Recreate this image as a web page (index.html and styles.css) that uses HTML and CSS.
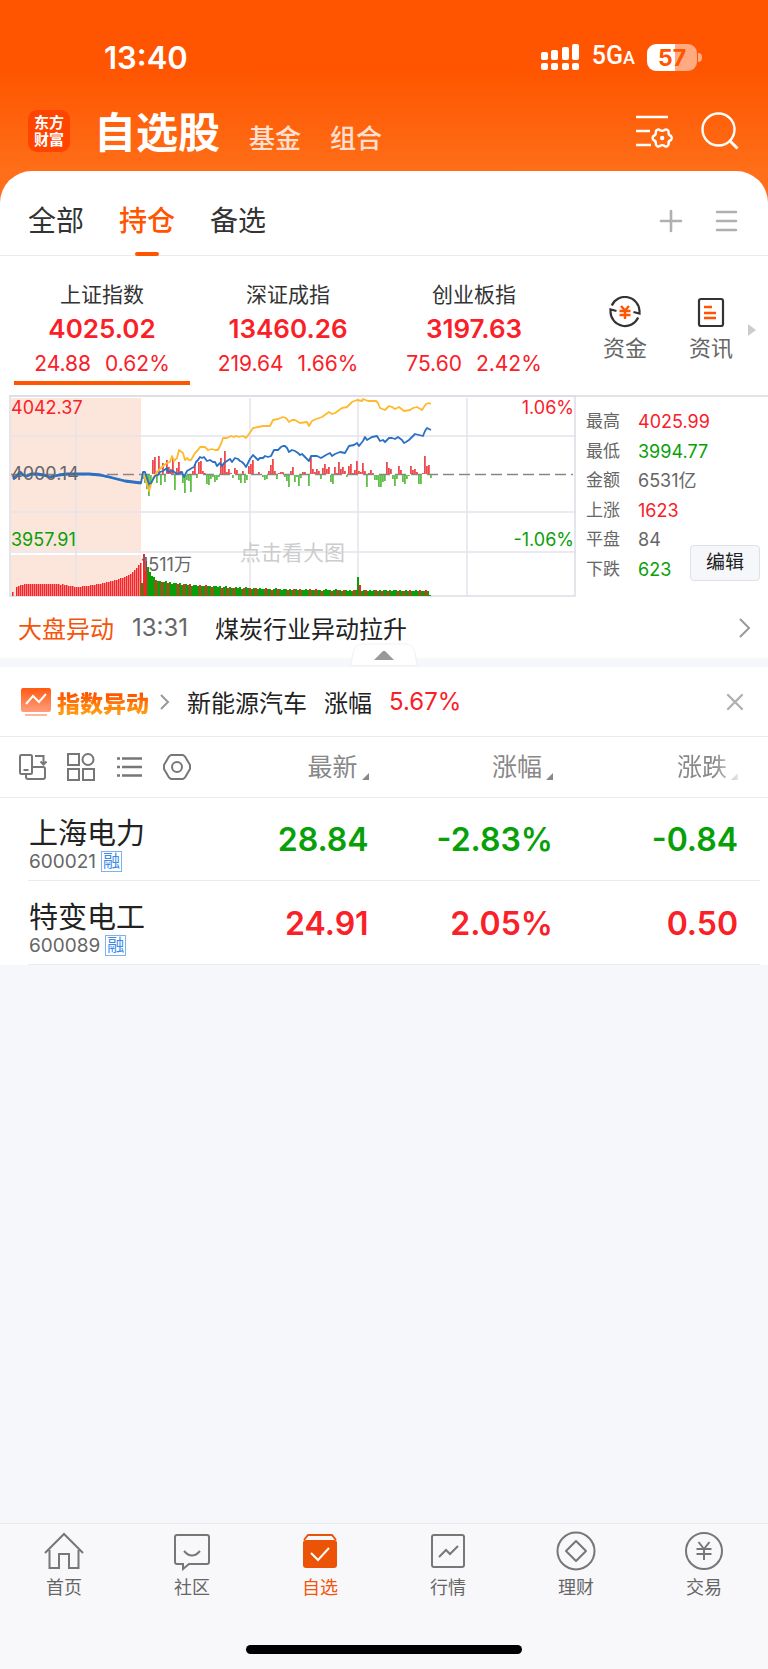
FILE: index.html
```html
<!DOCTYPE html>
<html lang="zh-CN">
<head>
<meta charset="utf-8">
<meta name="viewport" content="width=device-width, initial-scale=1">
<title>自选股</title>
<link rel="stylesheet" href="styles.css">
</head>
<body>
<header class="top">
  <div class="status">
    <time class="clock">13:40</time>
    <div class="status-right">
      <svg class="signal" width="40" height="28" viewBox="0 0 40 28" fill="#fff" aria-hidden="true">
        <rect x="1" y="9" width="7" height="8" rx="2"/><rect x="11" y="7" width="7" height="10" rx="2"/><rect x="22" y="4" width="7" height="13" rx="2"/><rect x="32" y="1" width="7" height="16" rx="2"/>
        <rect x="1" y="20" width="7" height="7" rx="2"/><rect x="11" y="20" width="7" height="7" rx="2"/><rect x="22" y="20" width="7" height="7" rx="2"/><rect x="32" y="20" width="7" height="7" rx="2"/>
      </svg>
      <span class="network">5G<small>A</small></span>
      <span class="battery">57</span>
    </div>
  </div>
  <div class="titlebar">
    <a class="logo" href="#">东方<br>财富</a>
    <nav class="sections">
      <h1><a href="#">自选股</a></h1>
      <a href="#">基金</a>
      <a href="#">组合</a>
    </nav>
    <button class="icon-btn" aria-label="设置">
      <svg width="38" height="38" viewBox="0 0 38 38" fill="none" stroke="#fff" stroke-width="2.4">
        <path d="M1 5h32M1 19h14M1 33h15"/>
        <path d="M22.200 17.800q1.500-1 3 .5q2 1.200 4 0q1.500-1.500 3-.5q1.800 1 1.300 3q0 2.400 2.500 3.200q1.500 2 0 4q-2.500.8-2.500 3.200q.5 2-1.300 3q-1.500 1-3-.5q-2-1.200-4 0q-1.500 1.500-3 .5q-1.800-1-1.300-3q0-2.400-2.500-3.200q-1.500-2 0-4q2.500-.8 2.500-3.200q-.5-2 1.300-3z" stroke-linejoin="round"/>
        <circle cx="27.200" cy="26" r="2.200" fill="#fff" stroke="none"/>
      </svg>
    </button>
    <button class="icon-btn" aria-label="搜索">
      <svg width="38" height="38" viewBox="0 0 38 38" fill="none" stroke="#fff" stroke-width="2.400"><circle cx="17.500" cy="17.500" r="16"/><path d="M28.500 28.500l8 8" stroke-width="3"/></svg>
    </button>
  </div>
</header>

<main class="sheet">
  <div class="groups">
    <a class="group" href="#">全部</a>
    <a class="group active" href="#">持仓</a>
    <a class="group" href="#">备选</a>
    <button class="icon-btn push" aria-label="添加">
      <svg width="24" height="24" viewBox="0 0 24 24" stroke="#b0b0b0" stroke-width="2.600" stroke-linecap="round"><path d="M12 2v20M2 12h20"/></svg>
    </button>
    <button class="icon-btn" aria-label="管理">
      <svg width="24" height="24" viewBox="0 0 24 24" stroke="#b0b0b0" stroke-width="2.500" stroke-linecap="round"><path d="M3 3h19M3 12h19M3 21h19"/></svg>
    </button>
  </div>

  <section class="indices">
    <a class="index active" href="#"><span class="index-name">上证指数</span><strong>4025.02</strong><span class="change"><span>24.88</span><span>0.62%</span></span></a>
    <a class="index" href="#"><span class="index-name">深证成指</span><strong>13460.26</strong><span class="change"><span>219.64</span><span>1.66%</span></span></a>
    <a class="index" href="#"><span class="index-name">创业板指</span><strong>3197.63</strong><span class="change"><span>75.60</span><span>2.42%</span></span></a>
    <div class="shortcuts">
      <a class="shortcut" href="#">
        <svg width="34" height="32" viewBox="0 0 34 32" fill="none" stroke="#333" stroke-width="2.200">
          <path d="M3.800 9.500A14.500 14.500 0 0 1 31.500 15v2.500l-6-1.500"/><path d="M30.200 21.500A14.500 14.500 0 0 1 2.500 16v-2.500l6 1.500"/>
          <path d="M13 10l4 4.500L21 10M11.500 15h11M11.500 19h11M17 14v9" stroke="#ff5500" stroke-width="2.400"/>
        </svg>资金</a>
      <a class="shortcut" href="#">
        <svg width="34" height="32" viewBox="0 0 34 32" fill="none" stroke="#333" stroke-width="2.200">
          <rect x="5" y="3" width="24" height="27" rx="2"/><path d="M10 11h8M10 17h12M10 22h12" stroke="#ff5500" stroke-width="2.400"/>
        </svg>资讯</a>
      <svg width="8" height="12" viewBox="0 0 8 12" fill="#ccc"><path d="M0 0l8 6-8 6z"/></svg>
    </div>
  </section>

  <section class="market">
    <figure class="chart" aria-label="上证指数分时图">
      <svg id="plot" viewBox="0 0 567 202" preserveAspectRatio="none"></svg>
      <span class="tag high">4042.37</span>
      <span class="tag mid">4000.14</span>
      <span class="tag low">3957.91</span>
      <span class="tag high-pct">1.06%</span>
      <span class="tag low-pct">-1.06%</span>
      <span class="tag volume">1511万</span>
      <span class="tag hint">点击看大图</span>
    </figure>
    <div class="quote">
      <dl class="stats">
        <dt>最高</dt><dd class="up">4025.99</dd>
        <dt>最低</dt><dd class="down">3994.77</dd>
        <dt>金额</dt><dd>6531亿</dd>
        <dt>上涨</dt><dd class="up">1623</dd>
        <dt>平盘</dt><dd>84</dd>
        <dt>下跌</dt><dd class="down">623</dd>
      </dl>
      <button class="edit">编辑</button>
    </div>
  </section>

  <a class="news" href="#">
    <span class="news-kind">大盘异动</span><time>13:31</time><span>煤炭行业异动拉升</span>
    <svg class="push" width="14" height="20" viewBox="0 0 14 20" fill="none" stroke="#999" stroke-width="2"><path d="M2 1l9 9-9 9"/></svg>
  </a>
  <div class="divider">
    <button class="collapse" aria-label="收起">
      <svg width="68" height="24" viewBox="0 0 68 24"><path d="M1 22.500C3 10 3 1 13 1h42c10 0 10 9 12 21.500z" fill="#fff" stroke="#f0f1f4"/><path d="M24 17l9-9h2l9 9z" fill="#999"/></svg>
    </button>
  </div>

  <section class="alert">
    <svg width="32" height="30" viewBox="0 0 32 30" fill="none">
      <defs><linearGradient id="warm" x2="0" y2="1"><stop stop-color="#ff5a12"/><stop offset="1" stop-color="#ff9e7d"/></linearGradient></defs>
      <rect x="1" y="1" width="30" height="24" rx="2" fill="url(#warm)"/><path d="M6 17l7-8 6 6 7-8" stroke="#fff" stroke-width="2"/><path d="M5 28h22" stroke="#ffb699" stroke-width="2"/>
    </svg>
    <strong class="alert-title">指数异动</strong>
    <svg width="12" height="18" viewBox="0 0 12 18" fill="none" stroke="#999" stroke-width="2"><path d="M2 2l7 7-7 7"/></svg>
    <a class="alert-text" href="#"><span>新能源汽车</span><span>涨幅</span><span class="up">5.67%</span></a>
    <button class="icon-btn push" aria-label="关闭">
      <svg width="18" height="18" viewBox="0 0 18 18" stroke="#b0b0b0" stroke-width="2.400" stroke-linecap="round"><path d="M2 2l14 14M16 2L2 16"/></svg>
    </button>
  </section>

  <table class="stocks">
    <thead>
      <tr>
        <th class="col-name">
          <div class="tools">
            <button class="icon-btn" aria-label="横竖屏">
              <svg width="30" height="30" viewBox="0 0 30 30" fill="none" stroke="#777" stroke-width="2"><rect x="2" y="3" width="12" height="19" rx="1.500"/><path d="M5.500 18h5M8 22v3q0 2 2 2h15q2 0 2-2v-8q0-2-2-2H14M17 4h8.500v8M22.500 9.500l3 3 3-3"/></svg>
            </button>
            <button class="icon-btn" aria-label="宫格">
              <svg width="30" height="30" viewBox="0 0 30 30" fill="none" stroke="#777" stroke-width="2"><rect x="2" y="2" width="11" height="11"/><circle cx="22" cy="7.500" r="5.500"/><rect x="2" y="17" width="11" height="11"/><rect x="17" y="17" width="11" height="11"/></svg>
            </button>
            <button class="icon-btn" aria-label="列表">
              <svg width="30" height="30" viewBox="0 0 30 30" fill="none" stroke="#777" stroke-width="2.600"><path d="M8 6.500h20M8 15h20M8 23.500h20M3 6.500h3M3 15h3M3 23.500h3"/></svg>
            </button>
            <button class="icon-btn" aria-label="指标">
              <svg width="30" height="30" viewBox="0 0 30 30" fill="none" stroke="#777" stroke-width="2"><path d="M9 3h12l2 1.500 5 8.500v4l-5 8.500-2 1.500H9l-2-1.500-5-8.500v-4l5-8.500z" stroke-linejoin="round"/><circle cx="15" cy="15" r="5"/></svg>
            </button>
          </div>
        </th>
        <th><button class="sort">最新</button></th>
        <th><button class="sort">涨幅</button></th>
        <th class="col-last"><button class="sort faded">涨跌</button></th>
      </tr>
    </thead>
    <tbody>
      <tr>
        <td class="col-name"><a href="#">上海电力</a><div class="code">600021<span class="margin">融</span></div></td>
        <td class="down">28.84</td><td class="down">-2.83%</td><td class="down col-last">-0.84</td>
      </tr>
      <tr>
        <td class="col-name"><a href="#">特变电工</a><div class="code">600089<span class="margin">融</span></div></td>
        <td class="up">24.91</td><td class="up">2.05%</td><td class="up col-last">0.50</td>
      </tr>
    </tbody>
  </table>
</main>

<nav class="tabbar">
  <div class="tabs">
    <a href="#"><svg width="40" height="40" viewBox="0 0 40 40"><path d="M1 22L20 3l19 19M5.500 19v18H15V23h10v14h9.500V19"/></svg>首页</a>
    <a href="#"><svg width="40" height="40" viewBox="0 0 40 40"><path d="M5 4h30q2 0 2 2v25q0 2-2 2H17l-6 5v-5H5q-2 0-2-2V6q0-2 2-2zM12 20q8 9 16 0"/></svg>社区</a>
    <a class="active" href="#"><svg width="40" height="40" viewBox="0 0 40 40"><path d="M4 9l4-5h24l4 5" /><rect x="3" y="9" width="34" height="28" rx="3" fill="#eb5406" stroke="none"/><path d="M11 22l7 7 11-12" stroke="#fff"/></svg>自选</a>
    <a href="#"><svg width="40" height="40" viewBox="0 0 40 40"><rect x="4" y="4" width="32" height="32" rx="2"/><path d="M11 26l7-7 4 4 8-8"/></svg>行情</a>
    <a href="#"><svg width="40" height="40" viewBox="0 0 40 40"><circle cx="20" cy="20" r="18.500"/><path d="M20 10l10 10-10 10-10-10z" stroke-linejoin="round"/></svg>理财</a>
    <a href="#"><svg width="40" height="40" viewBox="0 0 40 40"><circle cx="20" cy="20" r="18"/><path d="M14.500 11l5.500 7 5.500-7M12.500 18h15M12.500 23h15M20 18v11"/></svg>交易</a>
  </div>
  <div class="home-bar"></div>
</nav>
<script src="chart.js"></script>
</body>
</html>
```

FILE: styles.css
```css
* { box-sizing: border-box; }

body {
  margin: 0;
  min-height: 100vh;
  display: flex;
  flex-direction: column;
  background: #f6f7fa;
  color: #222;
  font-family: Inter, "Noto Sans CJK SC", sans-serif;
  font-size: 24px;
}

a { color: inherit; text-decoration: none; }

button {
  padding: 0;
  border: 0;
  background: none;
  color: inherit;
  font: inherit;
  cursor: pointer;
}

svg { display: block; flex: none; }

.up { color: #fa2028; }
.down { color: #08a008; }
.push { margin-left: auto; }
.icon-btn { display: block; flex: none; }

/* Header */
.top {
  height: 204px;
  padding-top: 36px;
  background: linear-gradient(#ff5500 70px, #ff6e18 171px);
  color: #fff;
}

.status {
  display: flex;
  justify-content: space-between;
  align-items: center;
  height: 42px;
  padding: 0 66px 0 104px;
}

.clock { font-size: 31px; font-weight: 600; }

.status-right { display: flex; align-items: center; gap: 12px; }
.network { font-family: Roboto, sans-serif; font-size: 25px; font-weight: 500; line-height: 32px; }
.network small { font-size: 18px; }

.battery {
  position: relative;
  width: 50px;
  height: 27px;
  margin-right: 5px;
  border-radius: 9px;
  background: linear-gradient(90deg, #fff 56%, #ffaa80 56%);
  color: #ff5500;
  font-size: 23px;
  font-weight: 700;
  line-height: 28px;
  text-align: center;
}

.battery::after {
  content: "";
  position: absolute;
  top: 9px;
  right: -5px;
  width: 4px;
  height: 9px;
  border-radius: 0 4px 4px 0;
  background: #ffaa80;
}

.titlebar {
  display: flex;
  align-items: center;
  gap: 28px;
  height: 76px;
  margin-top: 15px;
  padding: 0 29px 0 28px;
}

.logo {
  width: 42px;
  height: 42px;
  padding-top: 4px;
  border-radius: 9px;
  background: #ff4400;
  font-size: 15px;
  font-weight: 700;
  line-height: 17px;
  text-align: center;
}

.sections {
  display: flex;
  align-items: baseline;
  gap: 29px;
  margin-right: auto;
  padding-top: 10px;
  color: #ffe0d0;
  font-size: 26px;
  font-weight: 500;
  line-height: 60px;
}

.sections h1 { margin: 0 0 0 -4px; color: #fff; font-size: 42px; font-weight: 700; }

/* Sheet */
.sheet {
  margin-top: -33px;
  border-radius: 32px 32px 0 0;
  background: #fff;
}

.groups {
  display: flex;
  align-items: center;
  gap: 35px;
  height: 85px;
  padding: 0 30px 0 28px;
  border-bottom: 1px solid #ebebee;
}

.group {
  position: relative;
  padding-top: 16px;
  color: #333;
  font-size: 28px;
  line-height: 70px;
}

.group.active { color: #ff5500; font-weight: 500; }

.group.active::after {
  content: "";
  position: absolute;
  bottom: 0;
  left: 16px;
  width: 24px;
  height: 4px;
  border-radius: 2px;
  background: #ff5500;
}

.groups .icon-btn { margin-top: 16px; }
.groups .push { margin-right: -4px; }

/* Indices */
.indices {
  display: grid;
  grid-template-columns: 176fr 176fr 176fr 184fr;
  gap: 10px;
  height: 139px;
  padding: 23px 12px 10px 14px;
}

.index {
  display: flex;
  flex-direction: column;
  align-items: center;
  border-bottom: 4px solid transparent;
  color: #fa2028;
}

.index.active { border-color: #ff5500; }
.index-name { color: #333; font-size: 21px; line-height: 32px; }
.index strong { font-size: 26px; font-weight: 600; line-height: 36px; }
.change { display: flex; gap: 14px; font-size: 21px; line-height: 34px; white-space: nowrap; }

.shortcuts { display: flex; align-items: center; justify-content: flex-end; padding-bottom: 4px; }

.shortcut {
  display: flex;
  flex-direction: column;
  align-items: center;
  gap: 4px;
  margin-right: 42px;
  color: #666;
  font-size: 22px;
  line-height: 32px;
  white-space: nowrap;
}

.shortcut + .shortcut { margin-right: 15px; }

/* Intraday chart */
.market {
  display: grid;
  grid-template-columns: minmax(0, 567fr) minmax(0, 192fr);
  margin-left: 9px;
  border-top: 2px solid #e2e3e9;
}

.chart { position: relative; margin: -2px 0 0; }
.chart svg { width: 100%; height: 202px; }

.tag { position: absolute; font-size: 18px; line-height: 20px; }
.high { top: 3px; left: 2px; color: #fa2028; }
.mid { top: 69px; left: 2px; color: #666; }
.low { top: 135px; left: 2px; color: #08a008; }
.high-pct { top: 3px; right: 2px; color: #fa2028; }
.low-pct { top: 135px; right: 2px; color: #08a008; }
.volume { top: 160px; left: 132px; color: #666; }
.hint { top: 148px; right: 0; left: 0; color: #ccc; font-size: 21px; text-align: center; }

.quote { position: relative; padding: 10px 0 0 10px; }

.stats {
  display: grid;
  grid-template-columns: 52px 1fr;
  grid-template-rows: repeat(6, 1fr);
  height: 177px;
  margin: 0;
  color: #666;
  font-size: 17px;
  line-height: 29px;
}

.stats dd { margin: 0; font-size: 18px; }

.edit {
  position: absolute;
  top: 148px;
  right: 8px;
  width: 70px;
  height: 36px;
  border: 1px solid #dfe1e7;
  border-radius: 4px;
  background: #f6f7fa;
  font-size: 19px;
  line-height: 30px;
}

/* News */
.news {
  display: flex;
  align-items: center;
  height: 61px;
  padding: 0 16px 0 18px;
  white-space: nowrap;
}

.news-kind { color: #f4550b; }
.news time { margin: 0 27px 0 18px; color: #666; }

.divider { position: relative; height: 9px; background: #f6f7fa; }
.collapse { position: absolute; bottom: 0; left: 50%; margin-left: -34px; }

/* Alert */
.alert {
  display: flex;
  align-items: center;
  height: 70px;
  padding: 0 24px 0 20px;
  border-bottom: 1px solid #ebebee;
  white-space: nowrap;
}

.alert-title {
  margin: 0 10px 0 5px;
  background: linear-gradient(#ff5500 30%, #ff9a10 80%);
  background-clip: text;
  color: transparent;
  font-size: 23px;
  font-weight: 900;
}

.alert-text { display: flex; align-items: center; gap: 17px; margin-left: 16px; }

/* Stock table */
.stocks { width: 100%; border-collapse: collapse; table-layout: fixed; }
.stocks th, .stocks td { width: 24%; padding: 0; text-align: right; }
.stocks .col-name { width: 24%; text-align: left; }
.stocks .col-last { width: 28%; padding-right: 30px; }
.stocks thead tr { height: 60px; border-bottom: 1px solid #ebebee; }

.tools { display: flex; gap: 18px; padding-left: 18px; }

.sort {
  display: inline-flex;
  align-items: center;
  gap: 4px;
  color: #888;
  font-size: 25px;
  font-weight: 400;
  line-height: 34px;
}

.sort::after {
  content: "";
  align-self: flex-end;
  margin-bottom: 4px;
  border-left: 7px solid transparent;
  border-bottom: 7px solid #888;
}

.faded {
  -webkit-mask-image: linear-gradient(90deg, #000 60%, transparent 110%);
  mask-image: linear-gradient(90deg, #000 60%, transparent 110%);
}

.stocks tbody tr {
  height: 84px;
  background: linear-gradient(#ebebee, #ebebee) 28px bottom / calc(100% - 36px) 1px no-repeat;
}

.stocks td { font-size: 32px; font-weight: 600; }

.stocks td.col-name {
  padding: 11px 0 0 29px;
  font-size: 29px;
  font-weight: 400;
  line-height: 34px;
  white-space: nowrap;
}

.code { display: flex; align-items: center; gap: 5px; color: #666; font-size: 19px; line-height: 22px; }

.margin {
  width: 21px;
  height: 21px;
  border: 1px solid #7db2f0;
  color: #3c8ae8;
  font-size: 17px;
  line-height: 18px;
  text-align: center;
}

/* Tab bar */
.tabbar {
  position: sticky;
  bottom: 0;
  margin-top: auto;
  padding-bottom: 15px;
  border-top: 1px solid #e6e8ec;
  background: #f8f8fb;
}

.tabs { display: grid; grid-template-columns: repeat(6, 1fr); height: 121px; padding-top: 7px; }

.tabs a {
  display: flex;
  flex-direction: column;
  align-items: center;
  gap: 4px;
  color: #666;
  font-size: 18px;
  line-height: 26px;
}

.tabs svg { fill: none; stroke: #777; stroke-width: 2; }
.tabs .active { color: #f4550b; }
.tabs .active svg { stroke: #eb5406; }

.home-bar { width: 36%; height: 9px; margin: 0 auto; border-radius: 5px; background: #000; }
```

FILE: chart.js
```js
const RED = "#f5242b";
const GREEN = "#08a008";
const BASE = 79;
const BOTTOM = 201;

const index = "4,84 7,82 11,77 14,80 18,81 22,79 28,79 34,80 41,82 50,80 58,79 69,79 80,79 91,80 100,82 108,84 116,86 124,87 132,88 134,77 136,77 138,83 140,89 142,88 146,81 149,80 151,77 154,76 158,73 159,77 164,76 168,79 173,77 175,82 178,76 183,73 185,72 187,67 189,65 191,62 193,63 195,62 198,66 201,65 204,67 206,67 208,71 211,68 213,71 215,68 218,66 221,64 223,67 226,63 229,64 231,66 233,67 235,69 237,72 239,68 241,64 244,60 247,63 249,65 251,63 254,63 256,61 259,62 262,61 265,55 269,55 272,52 274,51 276,51 278,53 280,57 283,55 286,56 289,58 291,60 293,59 296,62 300,66 302,61 308,61 312,63 317,60 321,58 323,61 326,59 331,57 336,58 340,51 345,50 348,48 350,51 354,46 356,42 358,45 363,42 368,41 371,46 374,45 376,47 380,43 383,43 386,44 389,42 393,45 395,48 397,47 400,45 403,42 406,39 410,40 414,41 416,36 418,33 422,35";
const average = "134,78 137,86 140,96 144,83 148,77 154,71 158,68 161,67 163,61 165,66 168,63 170,55 174,58 176,65 178,63 180,65 182,65 186,58 189,55 191,52 196,52 199,55 203,54 206,55 209,55 212,49 214,43 218,43 222,41 225,42 227,41 230,42 234,41 237,43 240,39 244,33 249,32 254,31 256,31 261,31 264,25 269,24 274,22 277,23 280,27 283,25 286,25 291,28 298,27 300,31 303,26 307,24 313,22 320,17 323,19 326,18 333,13 338,12 343,7 348,5 353,6 354,4 359,6 367,6 369,8 371,13 376,15 380,11 383,12 386,14 390,12 395,16 401,15 404,13 408,12 413,15 415,12 417,9 420,8 422,9";

// Buying (+) and selling (-) strength, one value every two units from x = 134
const strength = [
  -4, -8, -14, -21, -9, 14, 17, -8, 18, -10, 11, -7, 14, 7, 5, 16, -15, 6, 12, 3,
  -8, -18, -5, -6, -17, 3, 10, -3, 12, 13, 3, 1, -9, -10, -4, -2, -7, -5, -2, 16,
  10, 23, 2, 5, 1, -3, 6, 4, -5, -8, 3, -8, -5, 8, 10, 14, 0, 0, 2, 0,
  -2, -5, -4, 3, 9, 15, 3, -4, 1, 2, 2, -2, -6, -12, 3, 7, -7, -2, -11, -3,
  2, 2, 0, -11, 18, 5, 2, 5, 3, -4, 6, 10, 5, 7, -7, -9, 7, 1, 12, 5,
  7, 3, -2, 8, 10, 1, 4, 13, 3, 2, 11, 3, -12, 1, 4, 1, -5, -5, -12, -12,
  -7, -6, 12, 6, 5, -4, -11, -4, 8, 4, -7, -9, -4, -1, 8, 4, 5, 2, -9, -9,
  1, 18, 8, 9, -3
];

const preVolume = [
  4, 0, 9, 10, 11, 11, 12, 12, 12, 12, 12, 12, 12, 12, 12, 12, 12, 12, 12, 12, 12, 12, 12, 12, 11, 12, 11, 11,
  10, 10, 10, 9, 9, 9, 9, 10, 10, 10, 10, 11, 11, 11, 12, 12, 12, 13, 13, 14, 14, 15, 15, 16, 16, 17, 18, 18,
  19, 20, 21, 22, 24, 26, 28, 31, 33
];

const plot = document.getElementById("plot");

function add(name, attributes) {
  const node = document.createElementNS("http://www.w3.org/2000/svg", name);
  for (const key in attributes) node.setAttribute(key, attributes[key]);
  plot.append(node);
}

function bar(x, y, width, height, fill) {
  add("rect", { x, y, width, height, fill });
}

bar(2, 3, 130, 153, "#fce5da");
bar(2, 160, 130, 41, "#fce5da");
add("path", { d: "M67 3v198M241 3v198M349 3v198M458 3v198M2 41h565M2 117h565M2 157h565", stroke: "#e3e4ec", "stroke-width": 1.5 });
add("path", { d: "M1 202V1h565v200H1", fill: "none", stroke: "#dcdde5", "stroke-width": 1.5 });
add("path", { d: `M2 ${BASE}.5h562`, stroke: "#888", "stroke-width": 1.5, "stroke-dasharray": "11 5" });

strength.forEach((value, i) => {
  bar(133 + i * 2, value > 0 ? BASE - value : BASE + 1, 1.8, Math.abs(value), value > 0 ? "#ee4a4e" : "#5fbf48");
});

preVolume.forEach((value, i) => bar(3 + i * 2, BOTTOM - value, 1.5, value, RED));

for (let i = 0; i < 145; i++) {
  const first = [13, 42, 35, 29, 24, 20, 19];
  let height = first[i] || Math.round(5 + 10 * Math.exp(-(i - 7) / 35) + (i * 7 % 5) / 3 - 0.5);
  if (i === 108) height = 19;
  if (i === 109) height = 11;
  if (i === 144) height = 1;
  const falling = i === 0 || i === 108 || (i > 2 && (i * 13 + i * i) % 11 < 5);
  bar(132 + i * 2, BOTTOM - height, 2, height, falling ? GREEN : RED);
}

add("polyline", { points: average, fill: "none", stroke: "#ffb92e", "stroke-width": 1.8, "stroke-linejoin": "round" });
add("polyline", { points: index, fill: "none", stroke: "#2a70c4", "stroke-width": 1.8, "stroke-linejoin": "round" });
add("polyline", { points: index.split(" ").slice(0, 19).join(" "), fill: "none", stroke: "#2a70c4", "stroke-width": 2.8, "stroke-linejoin": "round" });
```
